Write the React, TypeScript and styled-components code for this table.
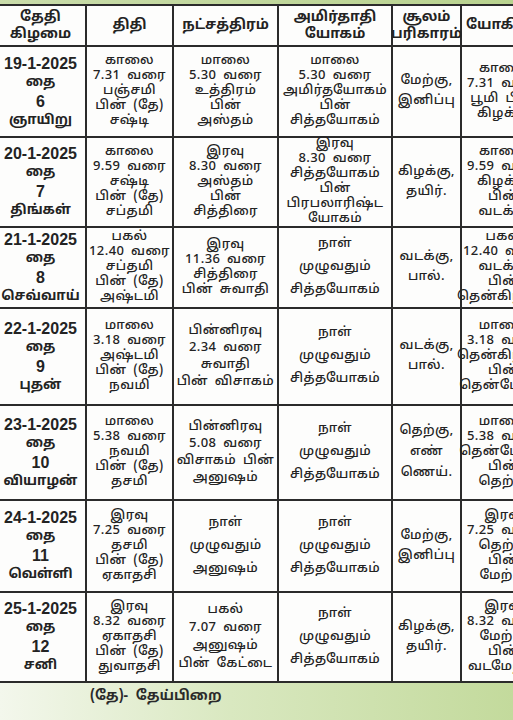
import React from 'react'
import styled, { createGlobalStyle } from 'styled-components'

const GlobalStyle = createGlobalStyle`
  html, body {
    margin: 0;
    padding: 0;
    background: #ffffff;
  }
  body {
    font-family: "Noto Sans Tamil", "Noto Sans", "Liberation Sans", sans-serif;
    color: #232323;
  }
`

const Page = styled.div`
  width: 513px;
  height: 720px;
  overflow: hidden;
  display: flex;
  flex-direction: column;
  background: #fafbf7;
`

const TopBand = styled.div`
  height: 4px;
  flex: none;
  background: linear-gradient(90deg, #c9dcaa 0%, #b9d38f 100%);
`

const Table = styled.div`
  flex: none;
  margin-left: -6px;
  width: 553px;
  display: grid;
  grid-template-columns: 89px 85px 103px 112px 67px 83px;
  grid-template-rows: 39px 89px 88px 79px 95px 93px 90px 88px;
  gap: 2px;
  padding: 2px;
  background: #2b2b2b;
`

const Cell = styled.div<{ $gap?: number; $head?: boolean }>`
  background: #fdfdfc;
  display: flex;
  flex-direction: column;
  align-items: center;
  justify-content: center;
  text-align: center;
  gap: ${({ $gap }) => $gap ?? 0}px;
  font-size: ${({ $head }) => ($head ? '14px' : '13px')};
  font-weight: ${({ $head }) => ($head ? 700 : 500)};
  line-height: ${({ $head }) => ($head ? '17px' : '15px')};
  letter-spacing: ${({ $head }) => ($head ? '0' : '0.4px')};
  word-spacing: 3px;
  white-space: nowrap;
  overflow: visible;
`

const DateLine = styled.span<{ $big?: boolean }>`
  display: block;
  font-family: ${({ $big }) =>
    $big ? '"Liberation Sans", "Noto Sans", sans-serif' : 'inherit'};
  font-size: ${({ $big }) => ($big ? '16px' : '13.5px')};
  font-weight: 700;
  letter-spacing: 0;
  line-height: 19px;
`

const Line = styled.span`
  display: block;
`

const Footer = styled.div`
  flex: 1;
  background: linear-gradient(90deg, #f3f7ec 0%, #d9e8c0 45%, #c3da9c 100%);
  display: flex;
  align-items: flex-start;
  padding: 5px 0 0 90px;
  font-size: 14px;
  font-weight: 700;
  word-spacing: 4px;
  color: #2a2a2a;
`

type Row = {
  date: string
  day: string
  weekday: string
  thithi: string[]
  star: string[]
  starGap?: number
  yogam: string[]
  yogamGap?: number
  soolam: string[]
  last: string[]
}

const rows: Row[] = [
  {
    date: '19-1-2025', day: '6', weekday: 'ஞாயிறு',
    thithi: ['காலை', '7.31 வரை', 'பஞ்சமி', 'பின் (தே)', 'சஷ்டி'],
    star: ['மாலை', '5.30 வரை', 'உத்திரம்', 'பின்', 'அஸ்தம்'],
    yogam: ['மாலை', '5.30 வரை', 'அமிர்தயோகம்', 'பின்', 'சித்தயோகம்'],
    soolam: ['மேற்கு,', 'இனிப்பு'],
    last: ['காலை', '7.31 வரை', 'பூமி பின்', 'கிழக்கு'],
  },
  {
    date: '20-1-2025', day: '7', weekday: 'திங்கள்',
    thithi: ['காலை', '9.59 வரை', 'சஷ்டி', 'பின் (தே)', 'சப்தமி'],
    star: ['இரவு', '8.30 வரை', 'அஸ்தம்', 'பின்', 'சித்திரை'],
    yogam: ['இரவு', '8.30 வரை', 'சித்தயோகம்', 'பின்', 'பிரபலாரிஷ்ட', 'யோகம்'],
    soolam: ['கிழக்கு,', 'தயிர்.'],
    last: ['காலை', '9.59 வரை', 'கிழக்கு', 'பின்', 'வடக்கு'],
  },
  {
    date: '21-1-2025', day: '8', weekday: 'செவ்வாய்',
    thithi: ['பகல்', '12.40 வரை', 'சப்தமி', 'பின் (தே)', 'அஷ்டமி'],
    star: ['இரவு', '11.36 வரை', 'சித்திரை', 'பின் சுவாதி'],
    yogam: ['நாள்', 'முழுவதும்', 'சித்தயோகம்'], yogamGap: 8,
    soolam: ['வடக்கு,', 'பால்.'],
    last: ['பகல்', '12.40 வரை', 'வடக்கு', 'பின்', 'தென்கிழக்கு'],
  },
  {
    date: '22-1-2025', day: '9', weekday: 'புதன்',
    thithi: ['மாலை', '3.18 வரை', 'அஷ்டமி', 'பின் (தே)', 'நவமி'],
    star: ['பின்னிரவு', '2.34 வரை', 'சுவாதி', 'பின் விசாகம்'], starGap: 2,
    yogam: ['நாள்', 'முழுவதும்', 'சித்தயோகம்'], yogamGap: 8,
    soolam: ['வடக்கு,', 'பால்.'],
    last: ['மாலை', '3.18 வரை', 'தென்கிழக்கு', 'பின்', 'தென்மேற்கு'],
  },
  {
    date: '23-1-2025', day: '10', weekday: 'வியாழன்',
    thithi: ['மாலை', '5.38 வரை', 'நவமி', 'பின் (தே)', 'தசமி'],
    star: ['பின்னிரவு', '5.08 வரை', 'விசாகம் பின்', 'அனுஷம்'], starGap: 2,
    yogam: ['நாள்', 'முழுவதும்', 'சித்தயோகம்'], yogamGap: 8,
    soolam: ['தெற்கு,', 'எண்', 'ணெய்.'],
    last: ['மாலை', '5.38 வரை', 'தென்மேற்கு', 'பின்', 'தெற்கு'],
  },
  {
    date: '24-1-2025', day: '11', weekday: 'வெள்ளி',
    thithi: ['இரவு', '7.25 வரை', 'தசமி', 'பின் (தே)', 'ஏகாதசி'],
    star: ['நாள்', 'முழுவதும்', 'அனுஷம்'], starGap: 8,
    yogam: ['நாள்', 'முழுவதும்', 'சித்தயோகம்'], yogamGap: 8,
    soolam: ['மேற்கு,', 'இனிப்பு'],
    last: ['இரவு', '7.25 வரை', 'தெற்கு', 'பின்', 'மேற்கு'],
  },
  {
    date: '25-1-2025', day: '12', weekday: 'சனி',
    thithi: ['இரவு', '8.32 வரை', 'ஏகாதசி', 'பின் (தே)', 'துவாதசி'],
    star: ['பகல்', '7.07 வரை', 'அனுஷம்', 'பின் கேட்டை'], starGap: 3,
    yogam: ['நாள்', 'முழுவதும்', 'சித்தயோகம்'], yogamGap: 8,
    soolam: ['கிழக்கு,', 'தயிர்.'],
    last: ['இரவு', '8.32 வரை', 'மேற்கு', 'பின்', 'வடமேற்கு'],
  },
]

const headers = [
  ['தேதி', 'கிழமை'],
  ['திதி'],
  ['நட்சத்திரம்'],
  ['அமிர்தாதி', 'யோகம்'],
  ['சூலம்', 'பரிகாரம்'],
  ['யோகினி'],
]

const Lines: React.FC<{ lines: string[] }> = ({ lines }) => (
  <>
    {lines.map((l, i) => (
      <Line key={i}>{l}</Line>
    ))}
  </>
)

export default function App() {
  return (
    <>
      <GlobalStyle />
      <Page>
        <TopBand />
        <Table>
          {headers.map((h, i) => (
            <Cell key={i} $head>
              <Lines lines={h} />
            </Cell>
          ))}
          {rows.map((r) => (
            <React.Fragment key={r.date}>
              <Cell>
                <DateLine $big>{r.date}</DateLine>
                <DateLine>தை</DateLine>
                <DateLine $big>{r.day}</DateLine>
                <DateLine>{r.weekday}</DateLine>
              </Cell>
              <Cell>
                <Lines lines={r.thithi} />
              </Cell>
              <Cell $gap={r.starGap}>
                <Lines lines={r.star} />
              </Cell>
              <Cell $gap={r.yogamGap}>
                <Lines lines={r.yogam} />
              </Cell>
              <Cell $gap={r.soolam.length > 2 ? 6 : 5}>
                <Lines lines={r.soolam} />
              </Cell>
              <Cell>
                <Lines lines={r.last} />
              </Cell>
            </React.Fragment>
          ))}
        </Table>
        <Footer>(தே)- தேய்பிறை</Footer>
      </Page>
    </>
  )
}
